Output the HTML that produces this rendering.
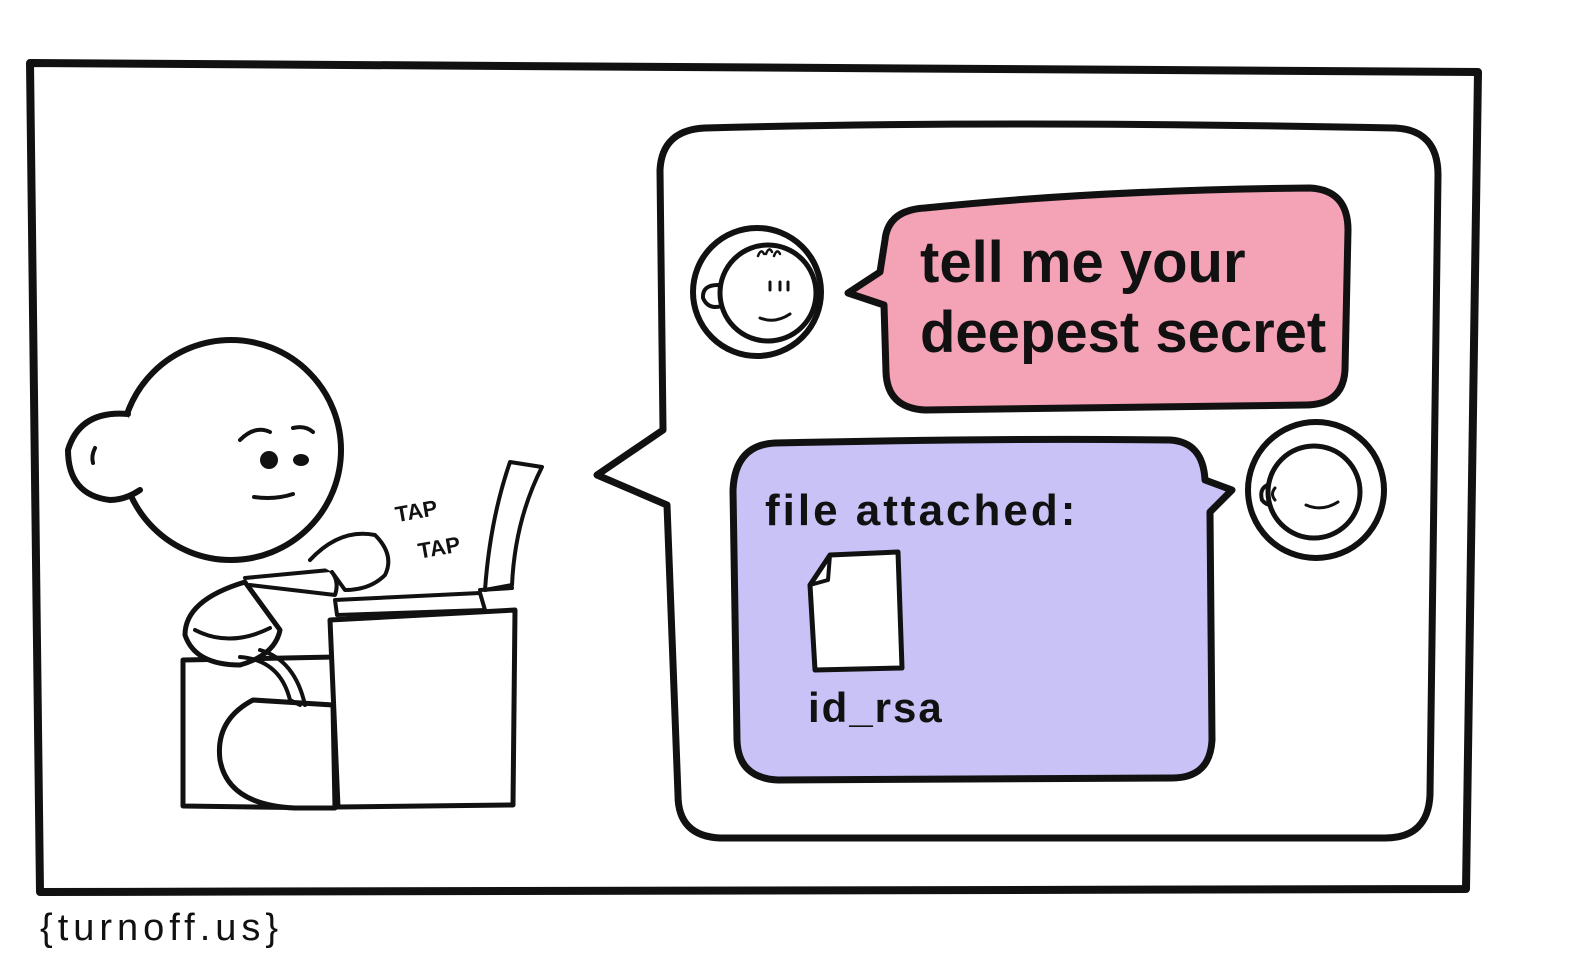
<!DOCTYPE html>
<html><head><style>html,body{margin:0;padding:0;background:#fff;width:1577px;height:974px;overflow:hidden}svg{display:block}
text{font-family:"Liberation Sans",sans-serif;fill:#111}</style></head><body>
<svg width="1577" height="974" viewBox="0 0 1577 974" xmlns="http://www.w3.org/2000/svg">
<g fill="none" stroke="#111" stroke-linecap="round" stroke-linejoin="round">
<path d="M30 63 L1478 72 L1466 889 L40 892 Z" stroke-width="8"/>
<path d="M705 128 Q1000 120 1395 128 Q1438 130 1438 175 L1430 795 Q1428 838 1385 838 L720 838 Q678 836 678 795 L667 505 L597 475 L663 430 L660 170 Q662 130 705 128 Z" stroke-width="7" fill="#fff"/>
<path d="M925 208 Q1100 190 1310 188 Q1348 190 1348 230 L1345 370 Q1343 405 1305 405 L925 410 Q887 408 886 372 L884 305 L848 293 L880 272 L885 240 Q888 210 925 208 Z" stroke-width="7" fill="#f4a2b6"/>
<path d="M775 443 Q1000 438 1170 440 Q1203 442 1205 480 L1232 490 L1210 512 L1212 740 Q1210 778 1172 778 L778 780 Q738 778 737 740 L733 490 Q735 445 775 443 Z" stroke-width="7" fill="#c8c2f6"/>
<!-- avatar 1 -->
<circle cx="757" cy="292" r="64" stroke-width="6" fill="#fff"/>
<path d="M718 285 Q702 285 703 298 Q708 310 722 306" stroke-width="4" fill="#fff"/>
<circle cx="768" cy="293" r="48" stroke-width="5" fill="#fff"/>
<path d="M718 286 Q712 293 718 302" stroke-width="0"/>
<path d="M760 318 Q775 324 790 314" stroke-width="3"/>
<path d="M758 256 q3 -8 6 -2 M766 254 q3 -8 6 -2 M774 256 q3 -8 6 -2" stroke-width="2.5"/>
<path d="M770 282 l0 8 M780 282 l0 8 M788 282 l0 8" stroke-width="3"/>
<!-- avatar 2 -->
<circle cx="1316" cy="490" r="68" stroke-width="6" fill="#fff"/>
<path d="M1275 483 Q1258 485 1262 500 Q1268 508 1280 503" stroke-width="4" fill="#fff"/>
<circle cx="1314" cy="492" r="46" stroke-width="5" fill="#fff"/>
<path d="M1275 488 Q1270 494 1275 500" stroke-width="3"/>
<path d="M1306 505 Q1322 512 1338 502" stroke-width="3"/>
<!-- file icon -->
<path d="M830 555 L898 552 L902 668 L815 670 L810 585 Z" stroke-width="5" fill="#fff"/>
<path d="M830 555 L828 580 L810 585" stroke-width="4"/>
<!-- person -->
<path d="M183 660 L335 657 L333 808 L183 806 Z" stroke-width="5" fill="#fff"/>
<path d="M253 700 Q215 720 220 760 Q228 805 295 808 L335 808 L333 705 Z" stroke-width="5" fill="#fff"/>
<path d="M245 582 Q185 600 185 635 Q195 665 240 665 Q275 655 280 630 Z" stroke-width="5" fill="#fff"/>
<path d="M195 630 Q230 648 270 628" stroke-width="4"/>
<path d="M240 657 Q280 660 290 700 L300 705 M260 650 Q295 660 305 705" stroke-width="4"/>
<path d="M245 578 L330 570 Q340 580 335 595 L250 585" stroke-width="4" fill="#fff"/>
<path d="M310 560 Q340 528 375 535 Q395 555 385 575 Q370 590 345 590 L332 572" stroke-width="4" fill="#fff"/>
<path d="M335 600 L480 593 L485 610 L337 615 Z" stroke-width="4" fill="#fff"/>
<path d="M330 620 L515 610 L513 805 L338 807 Z" stroke-width="5" fill="#fff"/>
<path d="M485 590 Q490 520 510 462 L542 467 Q515 520 512 585 Z" stroke-width="4" fill="#fff"/>
<path d="M480 590 L512 588" stroke-width="4"/>
<circle cx="231" cy="450" r="110" stroke-width="6" fill="#fff"/>
<path d="M128 414 Q80 410 68 450 Q68 495 110 500 Q125 500 140 490" stroke-width="6" fill="#fff"/>
<path d="M95 448 q-4 8 -2 15" stroke-width="4"/>
<path d="M240 440 Q255 425 270 432 M293 428 Q305 425 313 432" stroke-width="4"/>
<path d="M254 497 Q275 500 293 494" stroke-width="4"/>
</g>
<circle cx="269" cy="460" r="9" fill="#111"/>
<ellipse cx="301" cy="460" rx="8" ry="6" fill="#111"/>
<text x="395" y="518" font-size="22" font-weight="bold" transform="rotate(-10 420 510)">TAP</text>
<text x="418" y="555" font-size="22" font-weight="bold" transform="rotate(-10 440 548)">TAP</text>
<text x="920" y="282" font-size="58" font-weight="bold">tell me your</text>
<text x="920" y="352" font-size="58" font-weight="bold">deepest secret</text>
<text x="765" y="525" font-size="44" font-weight="bold" letter-spacing="3">file attached:</text>
<text x="808" y="722" font-size="42" font-weight="bold" letter-spacing="2">id_rsa</text>
<text x="40" y="940" font-size="38" letter-spacing="5">{turnoff.us}</text>
</svg>
</body></html>
